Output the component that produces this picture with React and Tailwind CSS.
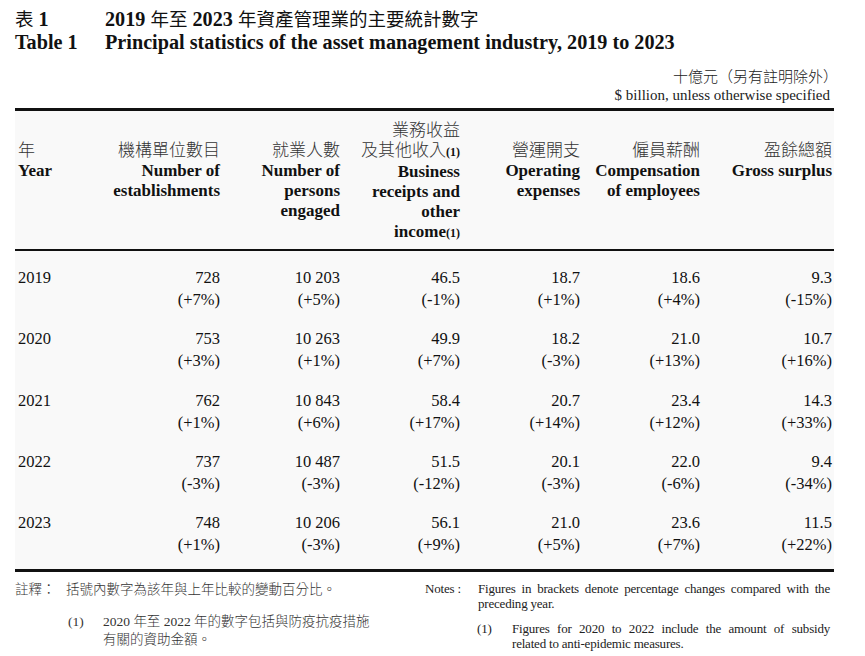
import React from 'react';

const ROWS = [
  { year: '2019', cells: [['728', '(+7%)'], ['10 203', '(+5%)'], ['46.5', '(-1%)'], ['18.7', '(+1%)'], ['18.6', '(+4%)'], ['9.3', '(-15%)']] },
  { year: '2020', cells: [['753', '(+3%)'], ['10 263', '(+1%)'], ['49.9', '(+7%)'], ['18.2', '(-3%)'], ['21.0', '(+13%)'], ['10.7', '(+16%)']] },
  { year: '2021', cells: [['762', '(+1%)'], ['10 843', '(+6%)'], ['58.4', '(+17%)'], ['20.7', '(+14%)'], ['23.4', '(+12%)'], ['14.3', '(+33%)']] },
  { year: '2022', cells: [['737', '(-3%)'], ['10 487', '(-3%)'], ['51.5', '(-12%)'], ['20.1', '(-3%)'], ['22.0', '(-6%)'], ['9.4', '(-34%)']] },
  { year: '2023', cells: [['748', '(+1%)'], ['10 206', '(-3%)'], ['56.1', '(+9%)'], ['21.0', '(+5%)'], ['23.6', '(+7%)'], ['11.5', '(+22%)']] },
];

const COLS = 'grid grid-cols-[85px_120px_120px_120px_120px_120px_1fr]';

const HeadCell = ({ zh, en, first }) => (
  <div className={first ? 'pt-[20px] text-left pl-[3px]' : 'pt-[20px] text-right'}>
    <div className="font-light text-[#333]">{zh}</div>
    <div className="font-bold">{en}</div>
  </div>
);

export default function App() {
  return (
    <div className="w-[865px] h-[656px] bg-white text-[#111] font-['Liberation_Serif','Noto_Sans_CJK_TC',serif] overflow-hidden">
      <div className="pl-[15px] pr-[31px] pt-[8px]">
        {/* title */}
        <div className="grid grid-cols-[90px_1fr] text-[20.2px] leading-[23px] font-bold">
          <div className="h-[23px]">
            <span className="font-normal text-[18.5px]">表</span> 1
          </div>
          <div className="h-[23px]">
            2019 <span className="font-normal text-[18.5px]">年至</span> 2023{' '}
            <span className="font-normal text-[18.5px]">年資產管理業的主要統計數字</span>
          </div>
          <div>Table 1</div>
          <div>Principal statistics of the asset management industry, 2019 to 2023</div>
        </div>

        {/* units */}
        <div className="mt-[14px] pr-[4px] text-right text-[15px] leading-[18px] text-[#222]">
          <div className="-mr-[8px] font-light">十億元（另有註明除外）</div>
          <div>$ billion, unless otherwise specified</div>
        </div>

        {/* table */}
        <div className="mt-[4px] w-[819px] bg-[#f9f9f9] border-t-[3px] border-b-[3px] border-[#111]">
          <div className={`${COLS} pr-[2px] pt-[10px] pb-[6px] text-[17px] leading-[20px] border-b-[2px] border-[#111]`}>
            <HeadCell first zh="年" en="Year" />
            <HeadCell zh="機構單位數目" en={<>Number of<br />establishments</>} />
            <HeadCell zh="就業人數" en={<>Number of<br />persons<br />engaged</>} />
            <div className="text-right">
              <div className="font-light text-[#333]">業務收益</div>
              <div className="font-light text-[#333]">
                及其他收入<span className="font-bold text-[12px] text-[#111]">(1)</span>
              </div>
              <div className="font-bold">
                Business<br />receipts and<br />other<br />income<span className="text-[12px]">(1)</span>
              </div>
            </div>
            <HeadCell zh="營運開支" en={<>Operating<br />expenses</>} />
            <HeadCell zh="僱員薪酬" en={<>Compensation<br />of employees</>} />
            <HeadCell zh="盈餘總額" en="Gross surplus" />
          </div>

          <div className="pt-[16px] pb-[13px] pr-[2px] flex flex-col gap-[17.3px] text-[16.5px] leading-[22px]">
            {ROWS.map((r) => (
              <div key={r.year} className={COLS}>
                <div className="pl-[3px]">{r.year}</div>
                {r.cells.map(([v, p], i) => (
                  <div key={i} className="text-right">
                    <div>{v}</div>
                    <div>{p}</div>
                  </div>
                ))}
              </div>
            ))}
          </div>
        </div>

        {/* notes */}
        <div className="mt-[9px] flex">
          <div className="w-[410px] text-[13.5px] leading-[18px] text-[#333] font-light">
            <div className="grid grid-cols-[51px_1fr]">
              <div>註釋：</div>
              <div>括號內數字為該年與上年比較的變動百分比。</div>
            </div>
            <div className="mt-[14px] ml-[53px] grid grid-cols-[35px_1fr]">
              <div>(1)</div>
              <div>
                2020 年至 2022 年的數字包括與防疫抗疫措施<br />有關的資助金額。
              </div>
            </div>
          </div>
          <div className="w-[405px] text-[13px] tracking-[-0.2px] leading-[15px] text-[#222]">
            <div className="grid grid-cols-[53px_1fr]">
              <div>Notes :</div>
              <div>
                <div className="whitespace-nowrap text-justify [text-align-last:justify]">Figures in brackets denote percentage changes compared with the</div>
                <div>preceding year.</div>
              </div>
            </div>
            <div className="mt-[10px] ml-[52px] grid grid-cols-[35px_1fr]">
              <div>(1)</div>
              <div>
                <div className="whitespace-nowrap text-justify [text-align-last:justify]">Figures for 2020 to 2022 include the amount of subsidy</div>
                <div>related to anti-epidemic measures.</div>
              </div>
            </div>
          </div>
        </div>
      </div>
    </div>
  );
}
